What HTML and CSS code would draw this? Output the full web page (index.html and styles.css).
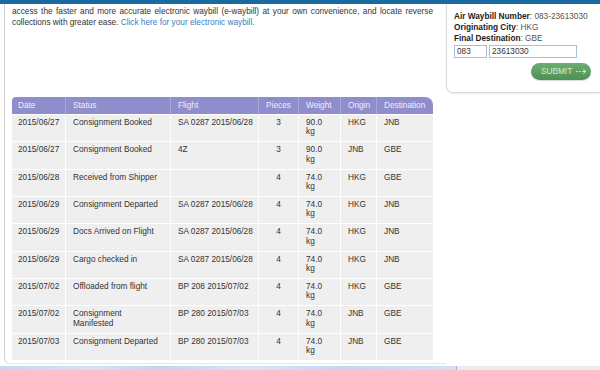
FILE: index.html
```html
<!DOCTYPE html>
<html>
<head>
<meta charset="utf-8">
<link rel="stylesheet" href="styles.css">
</head>
<body>
<div class="topbar"></div>
<div class="page">
  <main class="content">
    <p class="intro">
      <span class="intro-l1">access the faster and more accurate electronic waybill (e-waybill) at your own convenience, and locate reverse</span>
      <span class="intro-l2">collections with greater ease. <a href="#">Click here for your electronic waybill.</a></span>
    </p>
    <table class="track">
      <colgroup>
        <col class="c-date"><col class="c-status"><col class="c-flight"><col class="c-pcs"><col class="c-wt"><col class="c-org"><col class="c-dst">
      </colgroup>
      <thead>
        <tr><th>Date</th><th>Status</th><th>Flight</th><th class="ctr">Pieces</th><th>Weight</th><th>Origin</th><th>Destination</th></tr>
      </thead>
      <tbody>
        <tr><td>2015/06/27</td><td>Consignment Booked</td><td class="fl">SA 0287 2015/06/28</td><td class="ctr">3</td><td class="wt">90.0 kg</td><td>HKG</td><td>JNB</td></tr>
        <tr><td>2015/06/27</td><td>Consignment Booked</td><td class="fl">4Z</td><td class="ctr">3</td><td class="wt">90.0 kg</td><td>JNB</td><td>GBE</td></tr>
        <tr><td>2015/06/28</td><td>Received from Shipper</td><td class="fl"></td><td class="ctr">4</td><td class="wt">74.0 kg</td><td>HKG</td><td>GBE</td></tr>
        <tr><td>2015/06/29</td><td>Consignment Departed</td><td class="fl">SA 0287 2015/06/28</td><td class="ctr">4</td><td class="wt">74.0 kg</td><td>HKG</td><td>JNB</td></tr>
        <tr><td>2015/06/29</td><td>Docs Arrived on Flight</td><td class="fl">SA 0287 2015/06/28</td><td class="ctr">4</td><td class="wt">74.0 kg</td><td>HKG</td><td>JNB</td></tr>
        <tr><td>2015/06/29</td><td>Cargo checked in</td><td class="fl">SA 0287 2015/06/28</td><td class="ctr">4</td><td class="wt">74.0 kg</td><td>HKG</td><td>JNB</td></tr>
        <tr><td>2015/07/02</td><td>Offloaded from flight</td><td class="fl">BP 208 2015/07/02</td><td class="ctr">4</td><td class="wt">74.0 kg</td><td>HKG</td><td>GBE</td></tr>
        <tr><td>2015/07/02</td><td class="st-wrap">Consignment Manifested</td><td class="fl">BP 280 2015/07/03</td><td class="ctr">4</td><td class="wt">74.0 kg</td><td>JNB</td><td>GBE</td></tr>
        <tr><td>2015/07/03</td><td>Consignment Departed</td><td class="fl">BP 280 2015/07/03</td><td class="ctr">4</td><td class="wt">74.0 kg</td><td>JNB</td><td>GBE</td></tr>
      </tbody>
    </table>
  </main>
  <aside class="awb">
    <div class="awb-line"><b>Air Waybill Number</b>: 083-23613030</div>
    <div class="awb-line"><b>Originating City</b>: HKG</div>
    <div class="awb-line"><b>Final Destination</b>: GBE</div>
    <div class="awb-inputs">
      <input class="in-prefix" type="text" value="083">
      <input class="in-number" type="text" value="23613030">
    </div>
    <div class="awb-actions">
      <button class="submit" type="button">SUBMIT
        <svg class="arrow" width="11" height="7" viewBox="0 0 11 7"><path d="M0 3.5h1.6M3 3.5h1.6M6 3.5h3.4M7.2 1l2.6 2.5-2.6 2.5" fill="none" stroke="#d6ecd4" stroke-width="1"/></svg>
      </button>
    </div>
  </aside>
</div>
<div class="footbar">
  <div class="fb-blue"></div>
  <div class="fb-gray"></div>
</div>
</body>
</html>
```
FILE: styles.css
```css
html, body {
  margin: 0;
  padding: 0;
}
body {
  width: 600px;
  height: 370px;
  overflow: hidden;
  background: #fff;
  font-family: "Liberation Sans", Arial, sans-serif;
  font-size: 8.25px;
  color: #333;
}
.topbar {
  height: 4px;
  background: #1a69a1;
}
.page {
  display: flex;
  height: 362px;
}
.content {
  margin-left: 4px;
  width: 434px;
  height: 359px;
  padding-left: 7px;
  border-left: 1px solid #cfcfcf;
  border-bottom: 1px solid #e6e6e6;
  border-bottom-left-radius: 6px;
}
.intro {
  margin: 2px 0 0;
  width: 421px;
  line-height: 11px;
}
.intro-l1,
.intro-l2 {
  display: block;
  white-space: nowrap;
}
.intro-l1 {
  text-align: justify;
  text-align-last: justify;
}
.intro a {
  color: #3b7cbf;
  text-decoration: none;
}
.track {
  margin-top: 69px;
  width: 421px;
  table-layout: fixed;
  border-collapse: separate;
  border-spacing: 0;
}
.c-date { width: 54px; }
.c-status { width: 105px; }
.c-flight { width: 88px; }
.c-pcs { width: 40px; }
.c-wt { width: 42px; }
.c-org { width: 36px; }
.c-dst { width: 56px; }
.track th {
  background: #8f8dcc;
  color: #eeeefa;
  font-weight: normal;
  text-align: left;
  line-height: 9.4px;
  padding: 4px 0 3.6px 7px;
  border-right: 1px solid #a9a7d8;
  border-bottom: 1px solid #fff;
  white-space: nowrap;
}
.track th:first-child {
  border-top-left-radius: 4px;
  padding-left: 6px;
}
.track th:last-child {
  border-top-right-radius: 8px;
  border-right: none;
}
.track td {
  background: #efefef;
  line-height: 9.4px;
  padding: 3px 4px 4.5px 7px;
  vertical-align: top;
  border-right: 1px solid #fff;
  border-bottom: 1px solid #fff;
}
.track td:first-child {
  padding-left: 6px;
}
.track td:last-child {
  border-right: none;
}
.track .ctr {
  text-align: center;
  padding-left: 0;
  padding-right: 0;
}
.track td.fl {
  white-space: nowrap;
  padding-right: 0;
}
.track td.wt {
  padding-right: 10px;
}
.track td.st-wrap {
  padding-right: 12px;
}
.awb {
  flex: 1;
  height: 81px;
  padding: 7px 0 0 7px;
  border-left: 1px solid #dcdcdc;
  border-bottom: 1px solid #dcdcdc;
  border-bottom-left-radius: 7px;
  box-shadow: 0 1px 2px rgba(0,0,0,0.08);
  color: #555;
}
.awb-line {
  line-height: 11px;
}
.awb-line b {
  color: #222;
}
.awb-inputs {
  display: flex;
  gap: 2px;
  margin-top: 1px;
}
.awb-inputs input {
  box-sizing: border-box;
  height: 12.5px;
  margin: 0;
  padding: 0 2px;
  border: 1px solid #a7bfd7;
  font-family: inherit;
  font-size: 8.25px;
  color: #333;
  background: #fff;
  outline: none;
}
.in-prefix { width: 33px; }
.in-number { width: 88px; }
.awb-actions {
  display: flex;
  justify-content: flex-end;
  padding-right: 9px;
  margin-top: 5px;
}
.submit {
  display: flex;
  align-items: center;
  gap: 4px;
  height: 17.5px;
  width: 60px;
  padding: 0 0 0 10px;
  border: none;
  border-radius: 9px;
  background: linear-gradient(to bottom, #6cae70 0%, #5b9e60 55%, #4f8f55 100%);
  box-shadow: 0 1px 1px rgba(0,0,0,0.15);
  color: #d6ecd4;
  font-family: inherit;
  font-size: 8.25px;
}
.arrow {
  display: block;
}
.footbar {
  display: flex;
  height: 4px;
}
.fb-blue {
  width: 456px;
  background: linear-gradient(to right, #c6d7f2 0%, #d5e2f6 20%, #c3d4f1 35%, #d8e4f7 55%, #c5d6f2 75%, #d3e0f5 100%);
  border-right: 1px solid #9fb6dc;
}
.fb-gray {
  flex: 1;
  background: #ececec;
}
```
